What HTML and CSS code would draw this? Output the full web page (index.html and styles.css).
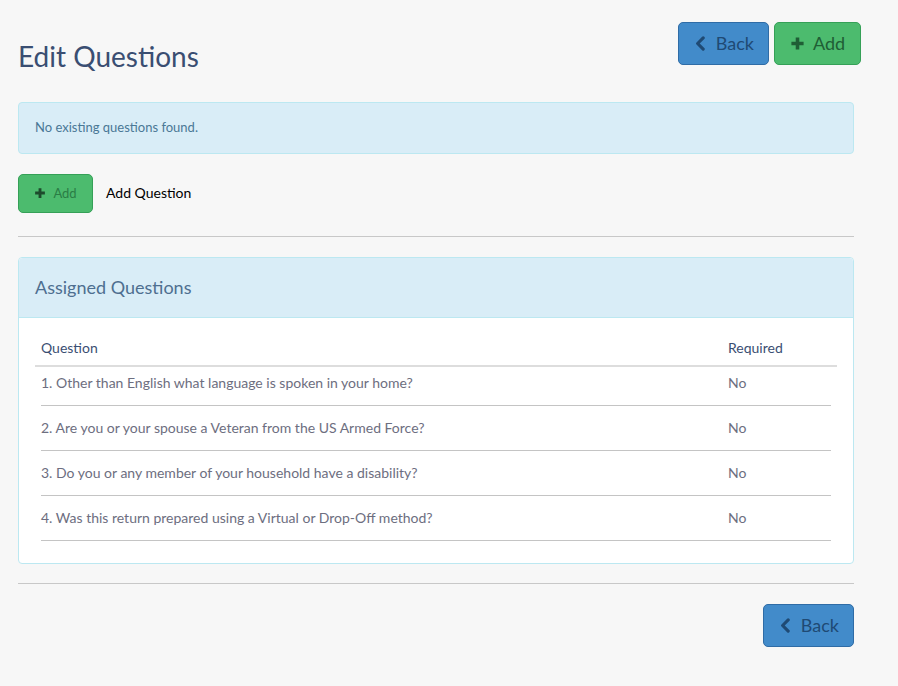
FILE: index.html
```html
<!DOCTYPE html>
<html lang="en">
<head>
    <meta charset="UTF-8">
    <title>Edit Questions</title>
    <link rel="stylesheet" href="styles.css">
</head>
<body>
    <div class="page">
        <div class="page-header">
            <h1>Edit Questions</h1>
            <div class="header-buttons">
                <button class="btn btn-blue">
                    <svg class="icon" viewBox="0 0 16 16"><path d="M11 2 L5 8 L11 14" fill="none" stroke="currentColor" stroke-width="3.4" stroke-linecap="round" stroke-linejoin="round"/></svg>
                    Back
                </button>
                <button class="btn btn-green">
                    <svg class="icon" viewBox="0 0 16 16"><path d="M8 1.5 V14.5 M1.5 8 H14.5" fill="none" stroke="currentColor" stroke-width="3.8"/></svg>
                    Add
                </button>
            </div>
        </div>

        <div class="alert">No existing questions found.</div>

        <div class="add-row">
            <button class="btn btn-green btn-small">
                <svg class="icon" viewBox="0 0 16 16"><path d="M8 1.5 V14.5 M1.5 8 H14.5" fill="none" stroke="currentColor" stroke-width="3.8"/></svg>
                Add
            </button>
            <span class="add-label">Add Question</span>
        </div>

        <hr class="rule-top">

        <div class="panel">
            <div class="panel-heading">Assigned Questions</div>
            <div class="panel-body">
                <div class="q-head">
                    <div>Question</div>
                    <div>Required</div>
                </div>
                <div class="q-row first">
                    <div>1. Other than English what language is spoken in your home?</div>
                    <div>No</div>
                </div>
                <div class="q-row">
                    <div>2. Are you or your spouse a Veteran from the US Armed Force?</div>
                    <div>No</div>
                </div>
                <div class="q-row">
                    <div>3. Do you or any member of your household have a disability?</div>
                    <div>No</div>
                </div>
                <div class="q-row">
                    <div>4. Was this return prepared using a Virtual or Drop-Off method?</div>
                    <div>No</div>
                </div>
            </div>
        </div>

        <hr class="rule-bottom">

        <div class="footer">
            <button class="btn btn-blue">
                <svg class="icon" viewBox="0 0 16 16"><path d="M11 2 L5 8 L11 14" fill="none" stroke="currentColor" stroke-width="3.4" stroke-linecap="round" stroke-linejoin="round"/></svg>
                Back
            </button>
        </div>
    </div>
</body>
</html>
```

FILE: styles.css
```css
body {
    font-family: Lato, "Open Sans", sans-serif;
    margin: 0;
    padding: 0;
    background-color: #f7f7f7;
}
.page {
    width: 836px;
    padding: 22px 0 0 18px;
}
.page-header {
    display: flex;
    justify-content: space-between;
    align-items: flex-start;
}
.page-header h1 {
    margin: 19px 0 0 0;
    font-size: 28px;
    font-weight: 400;
    line-height: 31px;
    color: #3a4e72;
}
.header-buttons {
    display: flex;
    gap: 5px;
    margin-right: -7px;
}
.btn {
    display: flex;
    align-items: center;
    justify-content: center;
    gap: 8px;
    height: 43px;
    padding: 0 14px 1px;
    font-family: inherit;
    font-size: 18px;
    border-radius: 5px;
    cursor: pointer;
}
.btn .icon {
    width: 15px;
    height: 15px;
}
.btn-blue {
    width: 91px;
    background: #428bca;
    border: 1px solid #2f6ca6;
    color: #1f4a74;
}
.btn-green {
    width: 87px;
    background: #4cbb6e;
    border: 1px solid #35a057;
    color: #1f5e35;
}
.btn-small {
    width: 75px;
    height: 39px;
    font-size: 13px;
    gap: 7px;
    color: #2a7d45;
}
.btn-small .icon {
    width: 12px;
    height: 12px;
    color: #1d4b2c;
}
.alert {
    margin-top: 30px;
    padding: 14px 16px 16px;
    line-height: 20px;
    font-size: 13px;
    color: #4a7896;
    background: #d9edf7;
    border: 1px solid #bce8f1;
    border-radius: 4px;
}
.add-row {
    display: flex;
    align-items: center;
    gap: 13px;
    margin-top: 20px;
}
.add-label {
    font-size: 14px;
    color: #000;
    margin-top: -3px;
}
hr {
    border: 0;
    border-top: 1px solid #c8c8c8;
}
.rule-top {
    margin: 23px 0 20px;
}
.rule-bottom {
    margin: 19px 0 20px;
}
.panel {
    background: #fff;
    border: 1px solid #bce8f1;
    border-radius: 4px;
}
.panel-heading {
    padding: 19px 16px 19px;
    font-size: 18px;
    line-height: 21px;
    color: #4e6f90;
    background: #d9edf7;
    border-bottom: 1px solid #bce8f1;
    border-radius: 4px 4px 0 0;
}
.panel-body {
    padding: 0 16px 22px;
}
.q-head {
    display: grid;
    grid-template-columns: 1fr 103px;
    padding: 21px 6px 8px;
    font-size: 14px;
    line-height: 18px;
    color: #3a4e72;
    border-bottom: 2px solid #dddddd;
}
.q-row {
    display: grid;
    grid-template-columns: 1fr 103px;
    margin: 0 6px;
    padding: 13px 0;
    font-size: 14px;
    line-height: 18px;
    color: #6d6e80;
    border-bottom: 1px solid #c4c4c4;
}
.q-row.first {
    padding-top: 7px;
}
.footer {
    display: flex;
    justify-content: flex-end;
}
```
